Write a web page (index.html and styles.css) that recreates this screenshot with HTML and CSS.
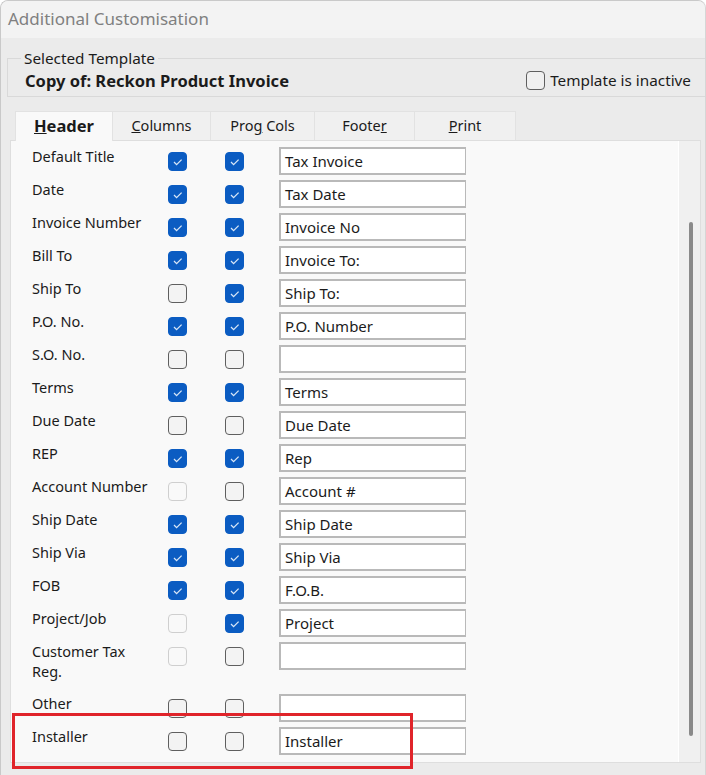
FILE: index.html
```html
<!DOCTYPE html>
<html lang="en">
<head>
    <meta charset="UTF-8">
    <title>Additional Customisation</title>
    <link rel="stylesheet" href="styles.css">
</head>
<body>
<div class="window">

    <!-- Title bar -->
    <div class="titlebar">Additional Customisation</div>

    <div class="client">

        <!-- Selected template group -->
        <fieldset class="group">
            <legend>Selected Template</legend>
            <div class="group-row">
                <span class="template-name">Copy of: Reckon Product Invoice</span>
                <label class="inactive"><span class="cb"></span>Template is inactive</label>
            </div>
        </fieldset>

        <!-- Tabs -->
        <div class="tabs">
            <div class="tab active"><u>H</u>eader</div>
            <div class="tab"><u>C</u>olumns</div>
            <div class="tab">Pro<u>g</u> Cols</div>
            <div class="tab">Foote<u>r</u></div>
            <div class="tab"><u>P</u>rint</div>
        </div>

        <div class="panel">
            <div class="rows">
                <div class="row"><span class="lbl">Default Title</span><span class="cb on"></span><span class="cb on"></span><span class="field">Tax Invoice</span></div>
                <div class="row"><span class="lbl">Date</span><span class="cb on"></span><span class="cb on"></span><span class="field">Tax Date</span></div>
                <div class="row"><span class="lbl">Invoice Number</span><span class="cb on"></span><span class="cb on"></span><span class="field">Invoice No</span></div>
                <div class="row"><span class="lbl">Bill To</span><span class="cb on"></span><span class="cb on"></span><span class="field">Invoice To:</span></div>
                <div class="row"><span class="lbl">Ship To</span><span class="cb"></span><span class="cb on"></span><span class="field">Ship To:</span></div>
                <div class="row"><span class="lbl">P.O. No.</span><span class="cb on"></span><span class="cb on"></span><span class="field">P.O. Number</span></div>
                <div class="row"><span class="lbl">S.O. No.</span><span class="cb"></span><span class="cb"></span><span class="field"></span></div>
                <div class="row"><span class="lbl">Terms</span><span class="cb on"></span><span class="cb on"></span><span class="field">Terms</span></div>
                <div class="row"><span class="lbl">Due Date</span><span class="cb"></span><span class="cb"></span><span class="field">Due Date</span></div>
                <div class="row"><span class="lbl">REP</span><span class="cb on"></span><span class="cb on"></span><span class="field">Rep</span></div>
                <div class="row"><span class="lbl">Account Number</span><span class="cb off"></span><span class="cb"></span><span class="field">Account #</span></div>
                <div class="row"><span class="lbl">Ship Date</span><span class="cb on"></span><span class="cb on"></span><span class="field">Ship Date</span></div>
                <div class="row"><span class="lbl">Ship Via</span><span class="cb on"></span><span class="cb on"></span><span class="field">Ship Via</span></div>
                <div class="row"><span class="lbl">FOB</span><span class="cb on"></span><span class="cb on"></span><span class="field">F.O.B.</span></div>
                <div class="row"><span class="lbl">Project/Job</span><span class="cb off"></span><span class="cb on"></span><span class="field">Project</span></div>
                <div class="row tall"><span class="lbl">Customer Tax<br>Reg.</span><span class="cb off"></span><span class="cb"></span><span class="field"></span></div>
                <div class="row"><span class="lbl">Other</span><span class="cb"></span><span class="cb"></span><span class="field"></span></div>
                <div class="row"><span class="lbl">Installer</span><span class="cb"></span><span class="cb"></span><span class="field">Installer</span></div>
            </div>
            <div class="scrollbar"><div class="thumb"></div></div>

            <!-- Highlight annotation -->
            <div class="highlight"></div>
        </div>

    </div>
</div>
</body>
</html>
```

FILE: styles.css
```css
/* Basic Reset */
* { margin: 0; padding: 0; box-sizing: border-box; }

body {
    font-family: "Noto Sans", "Open Sans", sans-serif;
    font-size: 14.5px;
    color: #1b1b1b;
    background-color: #ffffff;
    width: 706px;
    height: 775px;
    overflow: hidden;
}

/* Window frame */
.window {
    height: 775px;
    border-left: 1px solid #c9c9c9;
    border-top: 1px solid #c9c9c9;
    border-right: 1px solid #d6d6d6;
    border-radius: 8px 8px 0 0;
    overflow: hidden;
    background-color: #ebebeb;
}

.titlebar {
    height: 37px;
    padding: 6px 0 0 7px;
    font-size: 17px;
    color: #808080;
    background-color: #f3f3f3;
}

.client {
    padding: 12px 0 0 6px;
}

/* Group box */
.group {
    border: 1px solid #d9d9d9;
    border-right: none;
    height: 47px;
    padding: 0 14px 0 17px;
    margin-bottom: 14px;
}
.group legend {
    margin-left: -4px;
    padding: 0 3px;
    font-size: 15.3px;
    line-height: 16px;
    color: #1b1b1b;
}
.group-row {
    display: flex;
    justify-content: space-between;
    align-items: center;
    height: 20px;
    margin-top: 4px;
}
.template-name {
    font-weight: bold;
    font-size: 16.5px;
}
.inactive {
    display: flex;
    align-items: center;
    gap: 5px;
    font-size: 15.3px;
}

/* Tabs */
.tabs {
    display: flex;
    padding-left: 8px;
    height: 29px;
}
.tab {
    width: 100px;
    text-align: center;
    line-height: 27px;
    font-size: 14.5px;
    background-color: #f0f0f0;
    border: 1px solid #e2e2e2;
    border-bottom: none;
    margin-right: -1px;
}
.tab:nth-child(1) { width: 98px; }
.tab:nth-child(2) { width: 99px; }
.tab:nth-child(3) { width: 105px; }
.tab:nth-child(4) { width: 101px; }
.tab:nth-child(5) { width: 102px; }
.tab.active {
    background-color: #f9f9f9;
    font-weight: bold;
    font-size: 16.5px;
    height: 30px;
    position: relative;
    z-index: 1;
}

/* Tab panel */
.panel {
    position: relative;
    display: flex;
    height: 623px;
    margin: 0 4px 0 3px;
    border: 1px solid #dedede;
    background-color: #f9f9f9;
}
.rows {
    flex: 1;
    padding: 6px 0 0 21px;
    overflow: hidden;
}
.row {
    display: flex;
    align-items: flex-start;
    height: 33px;
}
.row.tall { height: 52px; }
.lbl {
    width: 136px;
    line-height: 20px;
    margin-top: -1px;
}
.cb {
    width: 19px;
    height: 19px;
    margin-top: 5px;
    margin-right: 38px;
    border: 1px solid #5f5f5f;
    border-radius: 4px;
    background-color: #f3f3f3;
    flex-shrink: 0;
}
.cb + .cb { margin-right: 35px; }
.cb.off {
    border-color: #cfcfcf;
    background-color: #f9f9f9;
}
.cb.on {
    border-color: #0b5cc2;
    background: #0b5cc2 url("data:image/svg+xml,%3Csvg xmlns='http://www.w3.org/2000/svg' width='17' height='17'%3E%3Cpath d='M5 9 l2.6 2.6 l5 -5' fill='none' stroke='%23d8e6f7' stroke-width='1.3'/%3E%3C/svg%3E") center no-repeat;
}
.inactive .cb {
    margin: 0;
    background-color: #f0f0f0;
}
.field {
    width: 187px;
    height: 28px;
    padding-left: 4px;
    line-height: 25px;
    font-size: 15px;
    background-color: #ffffff;
    border: 1px solid #b9b9b9;
    border-width: 2px 1px 2px 2px;
}

/* Scrollbar */
.scrollbar {
    width: 22px;
    border-left: 1px solid #ffffff;
    background-color: #f0f0f0;
    padding-top: 81px;
}
.thumb {
    width: 4px;
    height: 514px;
    margin-left: 10px;
    background-color: #8a8a8a;
    border-radius: 2px;
}

/* Red annotation box */
.highlight {
    position: absolute;
    left: 1px;
    top: 572px;
    width: 401px;
    height: 56px;
    border: 3px solid #e0242a;
}
```
